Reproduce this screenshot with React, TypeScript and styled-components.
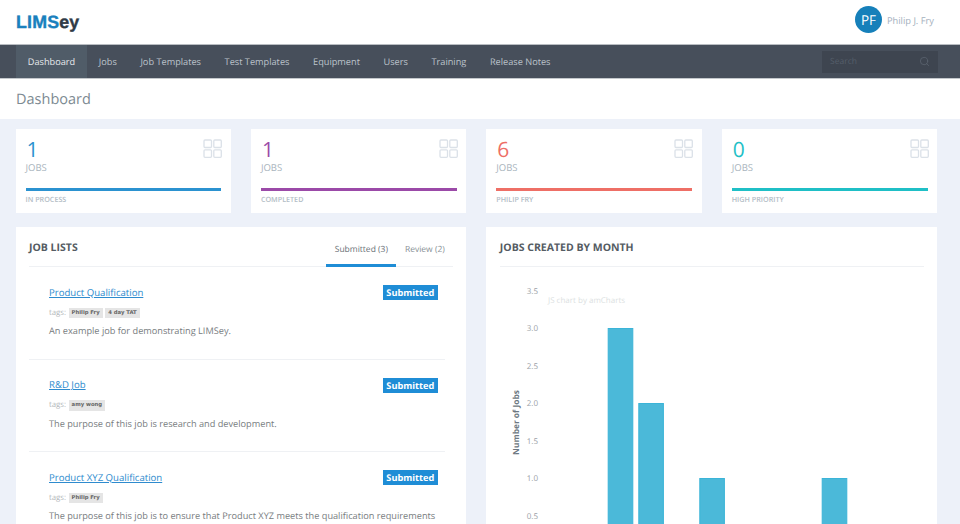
import React from "react";
import styled, { createGlobalStyle } from "styled-components";
import { Search } from "lucide-react";

const GlobalStyle = createGlobalStyle`
  html, body {
    margin: 0;
    height: 524px;
    overflow: hidden;
    background: #edf1f9;
    font-family: "Open Sans", "Liberation Sans", sans-serif;
    text-rendering: geometricPrecision;
  }
  * { box-sizing: border-box; }
`;

const Page = styled.div`
  height: 524px;
  overflow: hidden;
`;

const TopBar = styled.header`
  display: flex;
  justify-content: space-between;
  align-items: center;
  height: 44px;
  padding: 0 26px 0 16px;
  background: #fff;
`;

const Logo = styled.div`
  margin-top: 1px;
  font-family: "Liberation Sans", Arial, sans-serif;
  font-weight: 700;
  font-size: 17.8px;
  letter-spacing: 0.2px;
  color: #2f3a46;
  -webkit-text-stroke: 0.4px currentColor;
  span {
    color: #1a80bd;
  }
`;

const UserBox = styled.div`
  display: flex;
  align-items: center;
  gap: 5px;
  margin-top: -5px;
`;

const Avatar = styled.div`
  display: flex;
  align-items: center;
  justify-content: center;
  width: 27px;
  height: 27px;
  border-radius: 50%;
  background: #1680ba;
  color: #fff;
  font-size: 13.5px;
`;

const UserName = styled.span`
  font-size: 9.3px;
  color: #a3afbd;
  margin-top: 2px;
`;

const NavBar = styled.nav`
  display: flex;
  justify-content: space-between;
  align-items: center;
  height: 35px;
  padding: 0 22px 0 16px;
  background: #474f5b;
  border-top: 1px solid #b9bdc2;
  border-bottom: 1px solid #c4c8cc;
`;

const NavList = styled.div`
  display: flex;
  height: 100%;
`;

const NavItem = styled.a<{ $active?: boolean }>`
  display: flex;
  align-items: center;
  padding: 0 11.8px;
  font-size: 9.2px;
  color: ${(p) => (p.$active ? "#e6e9ec" : "#bcc3cb")};
  background: ${(p) => (p.$active ? "#505c68" : "transparent")};
`;

const SearchBox = styled.div`
  display: flex;
  justify-content: space-between;
  align-items: center;
  width: 116px;
  height: 22px;
  padding: 0 8px;
  background: #3e4550;
  color: #555e6a;
  font-size: 8.5px;
`;

const TitleBar = styled.div`
  display: flex;
  align-items: center;
  height: 40px;
  padding: 0 16px;
  background: #fff;
  color: #7d8a92;
  font-size: 14.5px;
`;

const Content = styled.main`
  padding: 10px 22.9px 0 15.5px;
`;

const StatGrid = styled.div`
  display: grid;
  grid-template-columns: repeat(4, minmax(0, 1fr));
  gap: 20px;
  margin-bottom: 14px;
`;

const StatCard = styled.div`
  position: relative;
  height: 84px;
  padding: 9px 9.5px 0 10px;
  background: #fff;
`;

const StatValue = styled.div<{ $color: string }>`
  height: 24px;
  padding-left: 1px;
  font-size: 21px;
  line-height: 24px;
  color: ${(p) => p.$color};
`;

const StatUnit = styled.div`
  margin-top: -1px;
  font-size: 9.5px;
  line-height: 13px;
  color: #a9b4bd;
`;

const StatBar = styled.div<{ $color: string }>`
  height: 3px;
  margin-top: 14px;
  background: ${(p) => p.$color};
`;

const StatLabel = styled.div`
  margin-top: 3px;
  font-size: 7.2px;
  line-height: 12px;
  font-weight: 600;
  color: #b3bdc6;
`;

const GridIcon = styled.svg`
  position: absolute;
  top: 10px;
  right: 8.5px;
`;

const PanelGrid = styled.div`
  display: grid;
  grid-template-columns: repeat(2, minmax(0, 1fr));
  gap: 20px;
`;

const Panel = styled.section`
  height: 400px;
  padding: 0 13px 0 13.5px;
  background: #fff;
`;

const PanelHead = styled.div`
  display: flex;
  justify-content: space-between;
  height: 40px;
  border-bottom: 1px solid #eff1f4;
`;

const PanelTitle = styled.h2`
  margin: 15px 0 0;
  font-size: 10.5px;
  line-height: 13px;
  font-weight: 700;
  color: #555c63;
`;

const Tabs = styled.div`
  display: flex;
`;

const Tab = styled.a<{ $active?: boolean }>`
  height: 40px;
  padding: 16px 8.5px 0;
  font-size: 8.5px;
  line-height: 13px;
  color: ${(p) => (p.$active ? "#6c7379" : "#888f95")};
  border-bottom: 3px solid ${(p) => (p.$active ? "#1f8dd6" : "transparent")};
`;

const JobItem = styled.article`
  position: relative;
  height: 92.5px;
  margin-right: 8px;
  padding: 17.5px 0 0 20px;
  border-bottom: 1px solid #eff1f4;
`;

const JobTitle = styled.a`
  display: block;
  font-size: 9.6px;
  line-height: 15px;
  color: #2e8bce;
  text-decoration: underline;
`;

const Badge = styled.span`
  position: absolute;
  top: 18px;
  right: 7.5px;
  padding: 0 3.5px;
  height: 15px;
  background: #1f8dd6;
  color: #fff;
  font-size: 9.2px;
  font-weight: 700;
  line-height: 15px;
`;

const TagRow = styled.div`
  display: flex;
  align-items: center;
  gap: 2.5px;
  margin-top: 8px;
  font-size: 7.8px;
  color: #b5b9bc;
`;

const Tag = styled.span`
  height: 10.5px;
  padding: 0 3px;
  background: #e5e5e5;
  color: #666;
  font-family: "DejaVu Sans", sans-serif;
  font-size: 5.3px;
  font-weight: 700;
  line-height: 10.5px;
`;

const JobText = styled.p`
  margin: 6px 0 0;
  font-size: 9.2px;
  line-height: 14px;
  color: #777c80;
  white-space: nowrap;
`;

const ChartSvg = styled.svg`
  display: block;
  margin-left: -13.5px;
`;

const stats = [
  { value: "1", label: "IN PROCESS", color: "#2b92d0" },
  { value: "1", label: "COMPLETED", color: "#9b4aa8" },
  { value: "6", label: "PHILIP FRY", color: "#ee6f66" },
  { value: "0", label: "HIGH PRIORITY", color: "#1fbfc6" },
];

const navItems = [
  "Dashboard",
  "Jobs",
  "Job Templates",
  "Test Templates",
  "Equipment",
  "Users",
  "Training",
  "Release Notes",
];

const jobs = [
  {
    title: "Product Qualification",
    tags: ["Philip Fry", "4 day TAT"],
    text: "An example job for demonstrating LIMSey.",
  },
  {
    title: "R&D Job",
    tags: ["amy wong"],
    text: "The purpose of this job is research and development.",
  },
  {
    title: "Product XYZ Qualification",
    tags: ["Philip Fry"],
    text: "The purpose of this job is to ensure that Product XYZ meets the qualification requirements",
  },
];

// y positions are relative to the top of the chart area (page y - 267)
const ticks = [
  { label: "3.5", y: 24 },
  { label: "3.0", y: 61 },
  { label: "2.5", y: 99 },
  { label: "2.0", y: 136 },
  { label: "1.5", y: 174 },
  { label: "1.0", y: 211 },
  { label: "0.5", y: 249 },
];

const bars = [
  { x: 122.2, top: 61.5 },
  { x: 152.8, top: 136.5 },
  { x: 213.8, top: 211.5 },
  { x: 336.2, top: 211.5 },
];

const SquaresIcon = () => (
  <GridIcon width="19" height="19" viewBox="0 0 19 19" fill="none" stroke="#dbe1e8" strokeWidth="1.3">
    <rect x="1" y="1" width="7.5" height="7.5" rx="1" />
    <rect x="10.8" y="1" width="7.5" height="7.5" rx="1" />
    <rect x="1" y="10.8" width="7.5" height="7.5" rx="1" />
    <rect x="10.8" y="10.8" width="7.5" height="7.5" rx="1" />
  </GridIcon>
);

const JobsChart = () => (
  <ChartSvg width="452" height="260" fontFamily="Open Sans, sans-serif">
    {ticks.map((t) => (
      <text key={t.label} x="52" y={t.y + 3} textAnchor="end" fontSize="8" fill="#9aa1a7">
        {t.label}
      </text>
    ))}
    <text x="62" y="36" fontSize="8" fill="#dcdfe2">
      JS chart by amCharts
    </text>
    <text
      transform="translate(33 155.5) rotate(-90)"
      textAnchor="middle"
      fontSize="8.4"
      fontWeight="700"
      fill="#6d7881"
    >
      Number of Jobs
    </text>
    {bars.map((b) => (
      <rect
        key={b.x}
        x={b.x}
        y={b.top}
        width="24.6"
        height={260 - b.top}
        fill="#4bb9d9"
        stroke="#3bb4d8"
      />
    ))}
  </ChartSvg>
);

const App: React.FC = () => {
  return (
    <Page>
      <GlobalStyle />
      <TopBar>
        <Logo>
          <span>LIMS</span>ey
        </Logo>
        <UserBox>
          <Avatar>PF</Avatar>
          <UserName>Philip J. Fry</UserName>
        </UserBox>
      </TopBar>
      <NavBar>
        <NavList>
          {navItems.map((item, i) => (
            <NavItem key={item} $active={i === 0}>
              {item}
            </NavItem>
          ))}
        </NavList>
        <SearchBox>
          Search
          <Search size={11} color="#5f6873" strokeWidth={1.5} />
        </SearchBox>
      </NavBar>
      <TitleBar>Dashboard</TitleBar>
      <Content>
        <StatGrid>
          {stats.map((s) => (
            <StatCard key={s.label}>
              <StatValue $color={s.color}>{s.value}</StatValue>
              <StatUnit>JOBS</StatUnit>
              <StatBar $color={s.color} />
              <StatLabel>{s.label}</StatLabel>
              <SquaresIcon />
            </StatCard>
          ))}
        </StatGrid>
        <PanelGrid>
          <Panel>
            <PanelHead>
              <PanelTitle>JOB LISTS</PanelTitle>
              <Tabs>
                <Tab $active>Submitted (3)</Tab>
                <Tab>Review (2)</Tab>
              </Tabs>
            </PanelHead>
            {jobs.map((job) => (
              <JobItem key={job.title}>
                <JobTitle>{job.title}</JobTitle>
                <Badge>Submitted</Badge>
                <TagRow>
                  tags:
                  {job.tags.map((tag) => (
                    <Tag key={tag}>{tag}</Tag>
                  ))}
                </TagRow>
                <JobText>{job.text}</JobText>
              </JobItem>
            ))}
          </Panel>
          <Panel>
            <PanelHead>
              <PanelTitle>JOBS CREATED BY MONTH</PanelTitle>
            </PanelHead>
            <JobsChart />
          </Panel>
        </PanelGrid>
      </Content>
    </Page>
  );
};

export default App;
